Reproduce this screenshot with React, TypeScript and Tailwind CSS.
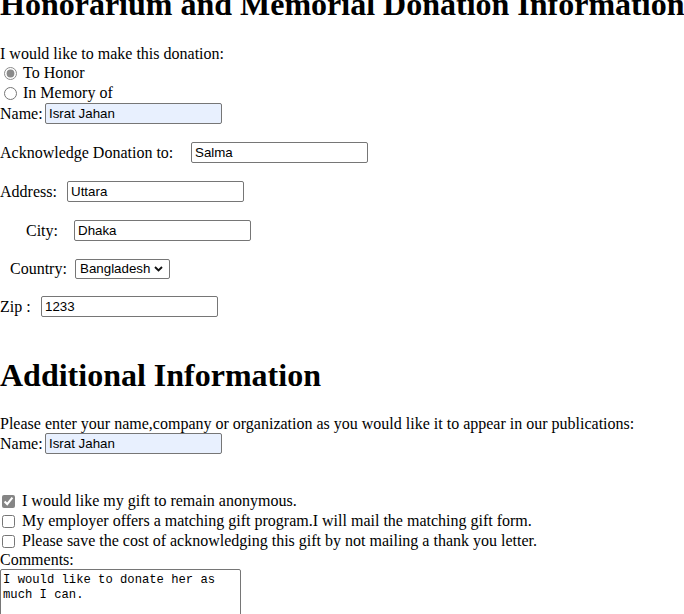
import React from "react";

const inputCls =
  "h-[21px] w-[177px] shrink-0 rounded-[2px] border border-[#767676] px-[3px] font-['Liberation_Sans',Arial,sans-serif] text-[13.33px] text-black outline-none";
const autoCls = inputCls + " bg-[#e8f0fe]";

function Row({
  label,
  labelWidth,
  labelPad,
  value,
  mt,
}: {
  label: string;
  labelWidth: string;
  labelPad?: string;
  value: string;
  mt: string;
}) {
  return (
    <div className={"flex h-[21px] items-center " + mt}>
      <span className={"shrink-0 whitespace-nowrap " + labelWidth + " " + (labelPad ?? "")}>{label}</span>
      <input type="text" defaultValue={value} className={inputCls} />
    </div>
  );
}

export default function App() {
  return (
    <div className="h-[614px] w-[684px] overflow-hidden bg-white font-['Liberation_Serif','Times_New_Roman',serif] text-[16px] leading-[18px] text-black">
      <h1 className="mt-[-14px] h-[37px] whitespace-nowrap text-[32px] font-bold leading-[37px]">
        Honorarium and Memorial Donation Information
      </h1>

      <div className="mt-[22px] h-[18px]">I would like to make this donation:</div>

      <div className="flex h-[20px] items-center">
        <input type="radio" name="kind" defaultChecked className="m-0 ml-[4px] h-[13px] w-[13px] accent-[#8a8a8a]" />
        <span className="ml-[6px]">To Honor</span>
      </div>
      <div className="flex h-[20px] items-center">
        <input type="radio" name="kind" className="m-0 ml-[4px] h-[13px] w-[13px]" />
        <span className="ml-[6px]">In Memory of</span>
      </div>

      <div className="flex h-[21px] items-center">
        <span className="w-[45px] shrink-0">Name:</span>
        <input type="text" defaultValue="Israt Jahan" className={autoCls} />
      </div>

      <Row label="Acknowledge Donation to:" labelWidth="w-[191px]" value="Salma" mt="mt-[18px]" />
      <Row label="Address:" labelWidth="w-[67px]" value="Uttara" mt="mt-[18px]" />
      <Row label="City:" labelWidth="w-[74px]" labelPad="pl-[26px]" value="Dhaka" mt="mt-[18px]" />

      <div className="mt-[18px] flex h-[20px] items-center">
        <span className="w-[75px] shrink-0 pl-[10px]">Country:</span>
        <div className="relative h-[20px] w-[95px] shrink-0">
          <select
            defaultValue="Bangladesh"
            className="h-[20px] w-[95px] appearance-none rounded-[2px] border border-[#767676] bg-white pl-[4px] font-['Liberation_Sans',Arial,sans-serif] text-[13.33px] text-black outline-none"
          >
            <option>Bangladesh</option>
            <option>India</option>
            <option>Nepal</option>
          </select>
          <svg
            className="pointer-events-none absolute right-[7px] top-[7px]"
            width="9"
            height="6"
            viewBox="0 0 9 6"
          >
            <path d="M1 1 L4.5 4.5 L8 1" fill="none" stroke="#111" strokeWidth="1.9" />
          </svg>
        </div>
      </div>

      <Row label="Zip :" labelWidth="w-[41px]" value="1233" mt="mt-[17px]" />

      <h1 className="mt-[40px] h-[37px] whitespace-nowrap text-[32px] font-bold leading-[37px]">
        Additional Information
      </h1>

      <div className="mt-[21px] h-[18px] whitespace-nowrap">
        Please enter your name,company or organization as you would like it to appear in our publications:
      </div>
      <div className="flex h-[21px] items-center">
        <span className="w-[45px] shrink-0">Name:</span>
        <input type="text" defaultValue="Israt Jahan" className={autoCls} />
      </div>

      <div className="mt-[37px] flex h-[20px] items-center">
        <input type="checkbox" defaultChecked className="m-0 ml-[2px] h-[13px] w-[13px] accent-[#858585]" />
        <span className="ml-[7px]">I would like my gift to remain anonymous.</span>
      </div>
      <div className="flex h-[20px] items-center">
        <input type="checkbox" className="m-0 ml-[2px] h-[13px] w-[13px]" />
        <span className="ml-[7px]">My employer offers a matching gift program.I will mail the matching gift form.</span>
      </div>
      <div className="flex h-[20px] items-center">
        <input type="checkbox" className="m-0 ml-[2px] h-[13px] w-[13px]" />
        <span className="ml-[7px]">Please save the cost of acknowledging this gift by not mailing a thank you letter.</span>
      </div>

      <div className="h-[18px]">Comments:</div>
      <textarea
        defaultValue="I would like to donate her as much I can."
        className="block h-[64px] w-[241px] resize-none rounded-[2px] border border-[#767676] px-[2px] pt-[3px] font-['Liberation_Mono','Courier_New',monospace] text-[12.2px] leading-[15px] text-black outline-none"
      />
    </div>
  );
}
